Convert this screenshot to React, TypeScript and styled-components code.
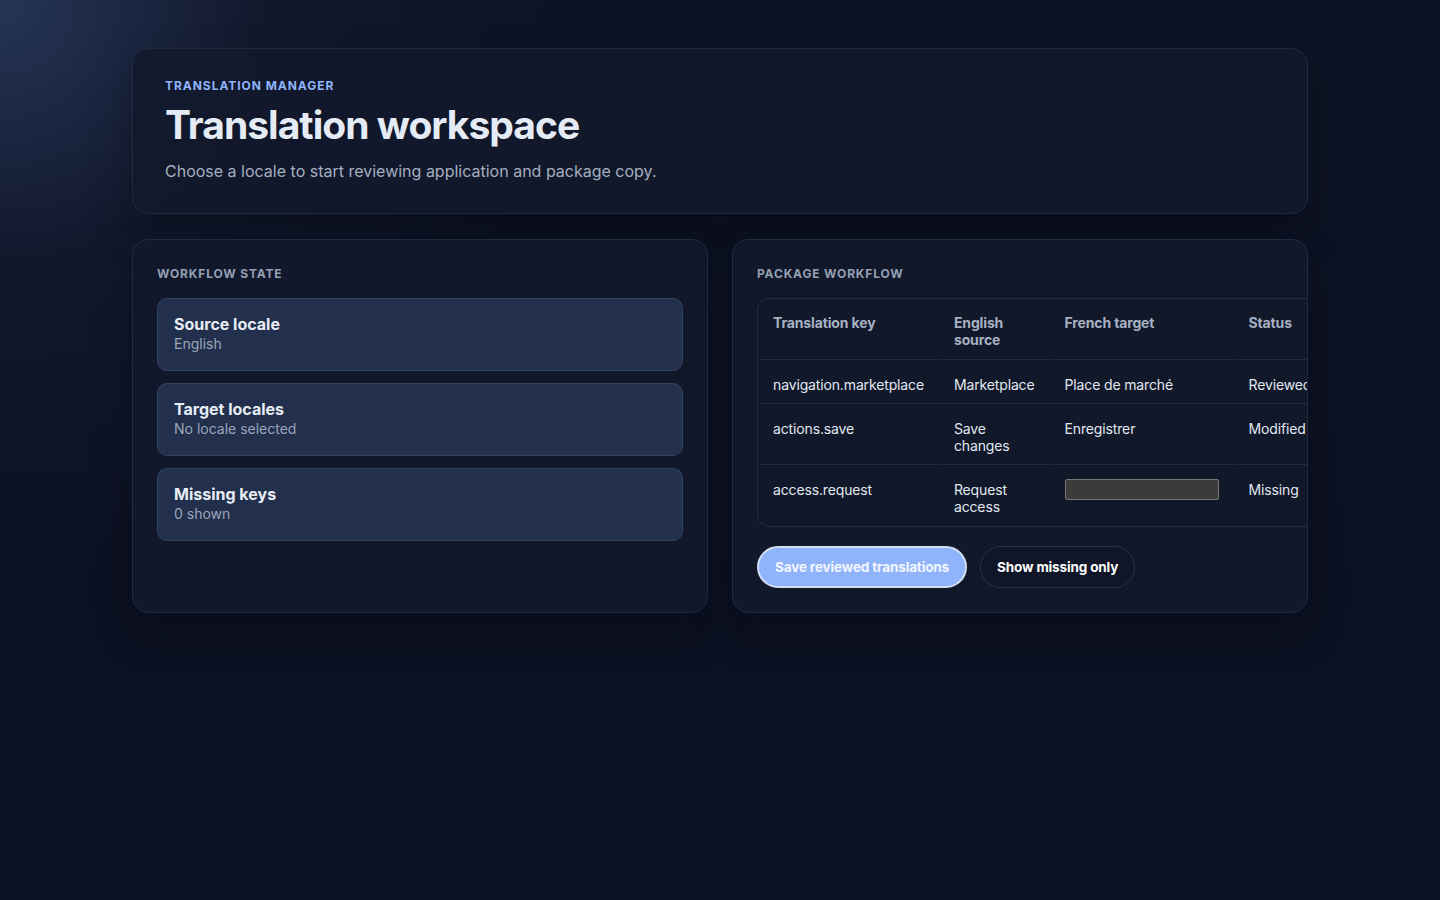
import * as React from 'react';
import styled, { createGlobalStyle } from 'styled-components';

const Global = createGlobalStyle`
  html, body {
    margin: 0;
    min-height: 100%;
    background: #0b1020;
  }
  body {
    font-family: Inter, 'Noto Sans', sans-serif;
    color: #e2e8f0;
    min-height: 900px;
    background:
      radial-gradient(circle at 0 0, rgba(40, 56, 92, 0.9) 0, rgba(20, 28, 50, 0.6) 260px, rgba(11, 16, 32, 0) 560px),
      linear-gradient(180deg, #0d1324 0%, #0b1022 100%);
  }
`;

const Page = styled.main`
  width: 1176px;
  margin: 0 auto;
  padding-top: 48px;
  display: flex;
  flex-direction: column;
  gap: 25px;
`;

const Card = styled.section`
  background: rgba(17, 25, 43, 0.92);
  border: 1px solid #1f2a3f;
  border-radius: 16px;
  box-shadow: 0 20px 40px rgba(0, 0, 0, 0.25);
  overflow: hidden;
`;

const Hero = styled(Card)`
  padding: 29px 32px 32px;
  height: 166px;
  box-sizing: border-box;
`;

const Eyebrow = styled.div`
  color: #8fb4fb;
  font-size: 12px;
  font-weight: 700;
  letter-spacing: 0.08em;
  text-transform: uppercase;
`;

const Title = styled.h1`
  margin: 9px 0 0;
  font-size: 39px;
  font-weight: 700;
  letter-spacing: -0.025em;
  line-height: 1.2;
  color: #e5ebf4;
`;

const Lead = styled.p`
  margin: 12px 0 0;
  font-size: 16px;
  color: #a4afc0;
`;

const Grid = styled.div`
  display: grid;
  grid-template-columns: 1fr 1fr;
  gap: 24px;
`;

const Panel = styled(Card)`
  padding: 24px;
  height: 374px;
  box-sizing: border-box;
`;

const PanelLabel = styled.h2`
  margin: 2px 0 17px;
  font-size: 12px;
  font-weight: 700;
  letter-spacing: 0.07em;
  text-transform: uppercase;
  color: #94a0b4;
`;

const StateList = styled.div`
  display: flex;
  flex-direction: column;
  gap: 12px;
`;

const StateItem = styled.div`
  background: #22304d;
  border: 1px solid #34435f;
  border-radius: 10px;
  padding: 15px 16px 16px;
  height: 73px;
  box-sizing: border-box;
`;

const StateTitle = styled.div`
  font-size: 16px;
  font-weight: 700;
  color: #e8edf5;
`;

const StateSub = styled.div`
  font-size: 14px;
  color: #9ba6b8;
  margin-top: 1px;
`;

const TableWrap = styled.div`
  width: 600px;
  border: 1px solid #222d42;
  border-radius: 12px;
  overflow: hidden;
`;

const Table = styled.table`
  border-collapse: separate;
  border-spacing: 2px;
  margin: -1px;
  font-size: 14px;
  letter-spacing: -0.01em;
`;

const Th = styled.th<{ $w: number }>`
  width: ${p => p.$w}px;
  text-align: left;
  vertical-align: top;
  padding: 14px 14px 11px;
  height: 34px;
  line-height: 17px;
  font-weight: 700;
  color: #a7b1c2;
  border-bottom: 1px solid #222d42;
`;

const Td = styled.td`
  vertical-align: top;
  padding: 14px 14px 10px;
  color: #e2e8f0;
  line-height: 17px;
  border-bottom: 1px solid #222d42;
  tr:last-child > & {
    border-bottom: none;
  }
`;

const TargetInput = styled.input`
  display: block;
  box-sizing: border-box;
  width: 154px;
  height: 21px;
  margin-top: -2px;
  background: #3b3b3b;
  border: 1px solid #767676;
  border-radius: 2px;
  padding: 0;
`;

const Actions = styled.div`
  display: flex;
  gap: 13px;
  margin-top: 19px;
`;

const Button = styled.button<{ $primary?: boolean }>`
  height: 42px;
  padding: 0 16px;
  border-radius: 999px;
  font-family: Inter, sans-serif;
  font-size: 13.5px;
  font-weight: 700;
  letter-spacing: -0.01em;
  cursor: pointer;
  color: ${p => (p.$primary ? '#f4f7ff' : '#ffffff')};
  background: ${p => (p.$primary ? '#8fb4fb' : '#0f1627')};
  border: ${p => (p.$primary ? '2px solid #d3def5' : '1px solid #263248')};
`;

const states = [
  { title: 'Source locale', sub: 'English' },
  { title: 'Target locales', sub: 'No locale selected' },
  { title: 'Missing keys', sub: '0 shown' },
];

const rows = [
  { key: 'navigation.marketplace', en: 'Marketplace', fr: 'Place de marché', status: 'Reviewed' },
  { key: 'actions.save', en: 'Save changes', fr: 'Enregistrer', status: 'Modified' },
  { key: 'access.request', en: 'Request access', fr: null, status: 'Missing' },
];

export default function App() {
  return (
    <>
      <Global />
      <Page>
        <Hero>
          <Eyebrow>Translation manager</Eyebrow>
          <Title>Translation workspace</Title>
          <Lead>Choose a locale to start reviewing application and package copy.</Lead>
        </Hero>
        <Grid>
          <Panel>
            <PanelLabel>Workflow state</PanelLabel>
            <StateList>
              {states.map(s => (
                <StateItem key={s.title}>
                  <StateTitle>{s.title}</StateTitle>
                  <StateSub>{s.sub}</StateSub>
                </StateItem>
              ))}
            </StateList>
          </Panel>
          <Panel>
            <PanelLabel>Package workflow</PanelLabel>
            <TableWrap>
              <Table>
                <thead>
                  <tr>
                    <Th $w={150}>Translation key</Th>
                    <Th $w={78}>English source</Th>
                    <Th $w={153}>French target</Th>
                    <Th $w={90}>Status</Th>
                  </tr>
                </thead>
                <tbody>
                  {rows.map(r => (
                    <tr key={r.key}>
                      <Td>{r.key}</Td>
                      <Td>{r.en}</Td>
                      <Td>{r.fr ?? <TargetInput aria-label="French target" />}</Td>
                      <Td>{r.status}</Td>
                    </tr>
                  ))}
                </tbody>
              </Table>
            </TableWrap>
            <Actions>
              <Button $primary>Save reviewed translations</Button>
              <Button>Show missing only</Button>
            </Actions>
          </Panel>
        </Grid>
      </Page>
    </>
  );
}
